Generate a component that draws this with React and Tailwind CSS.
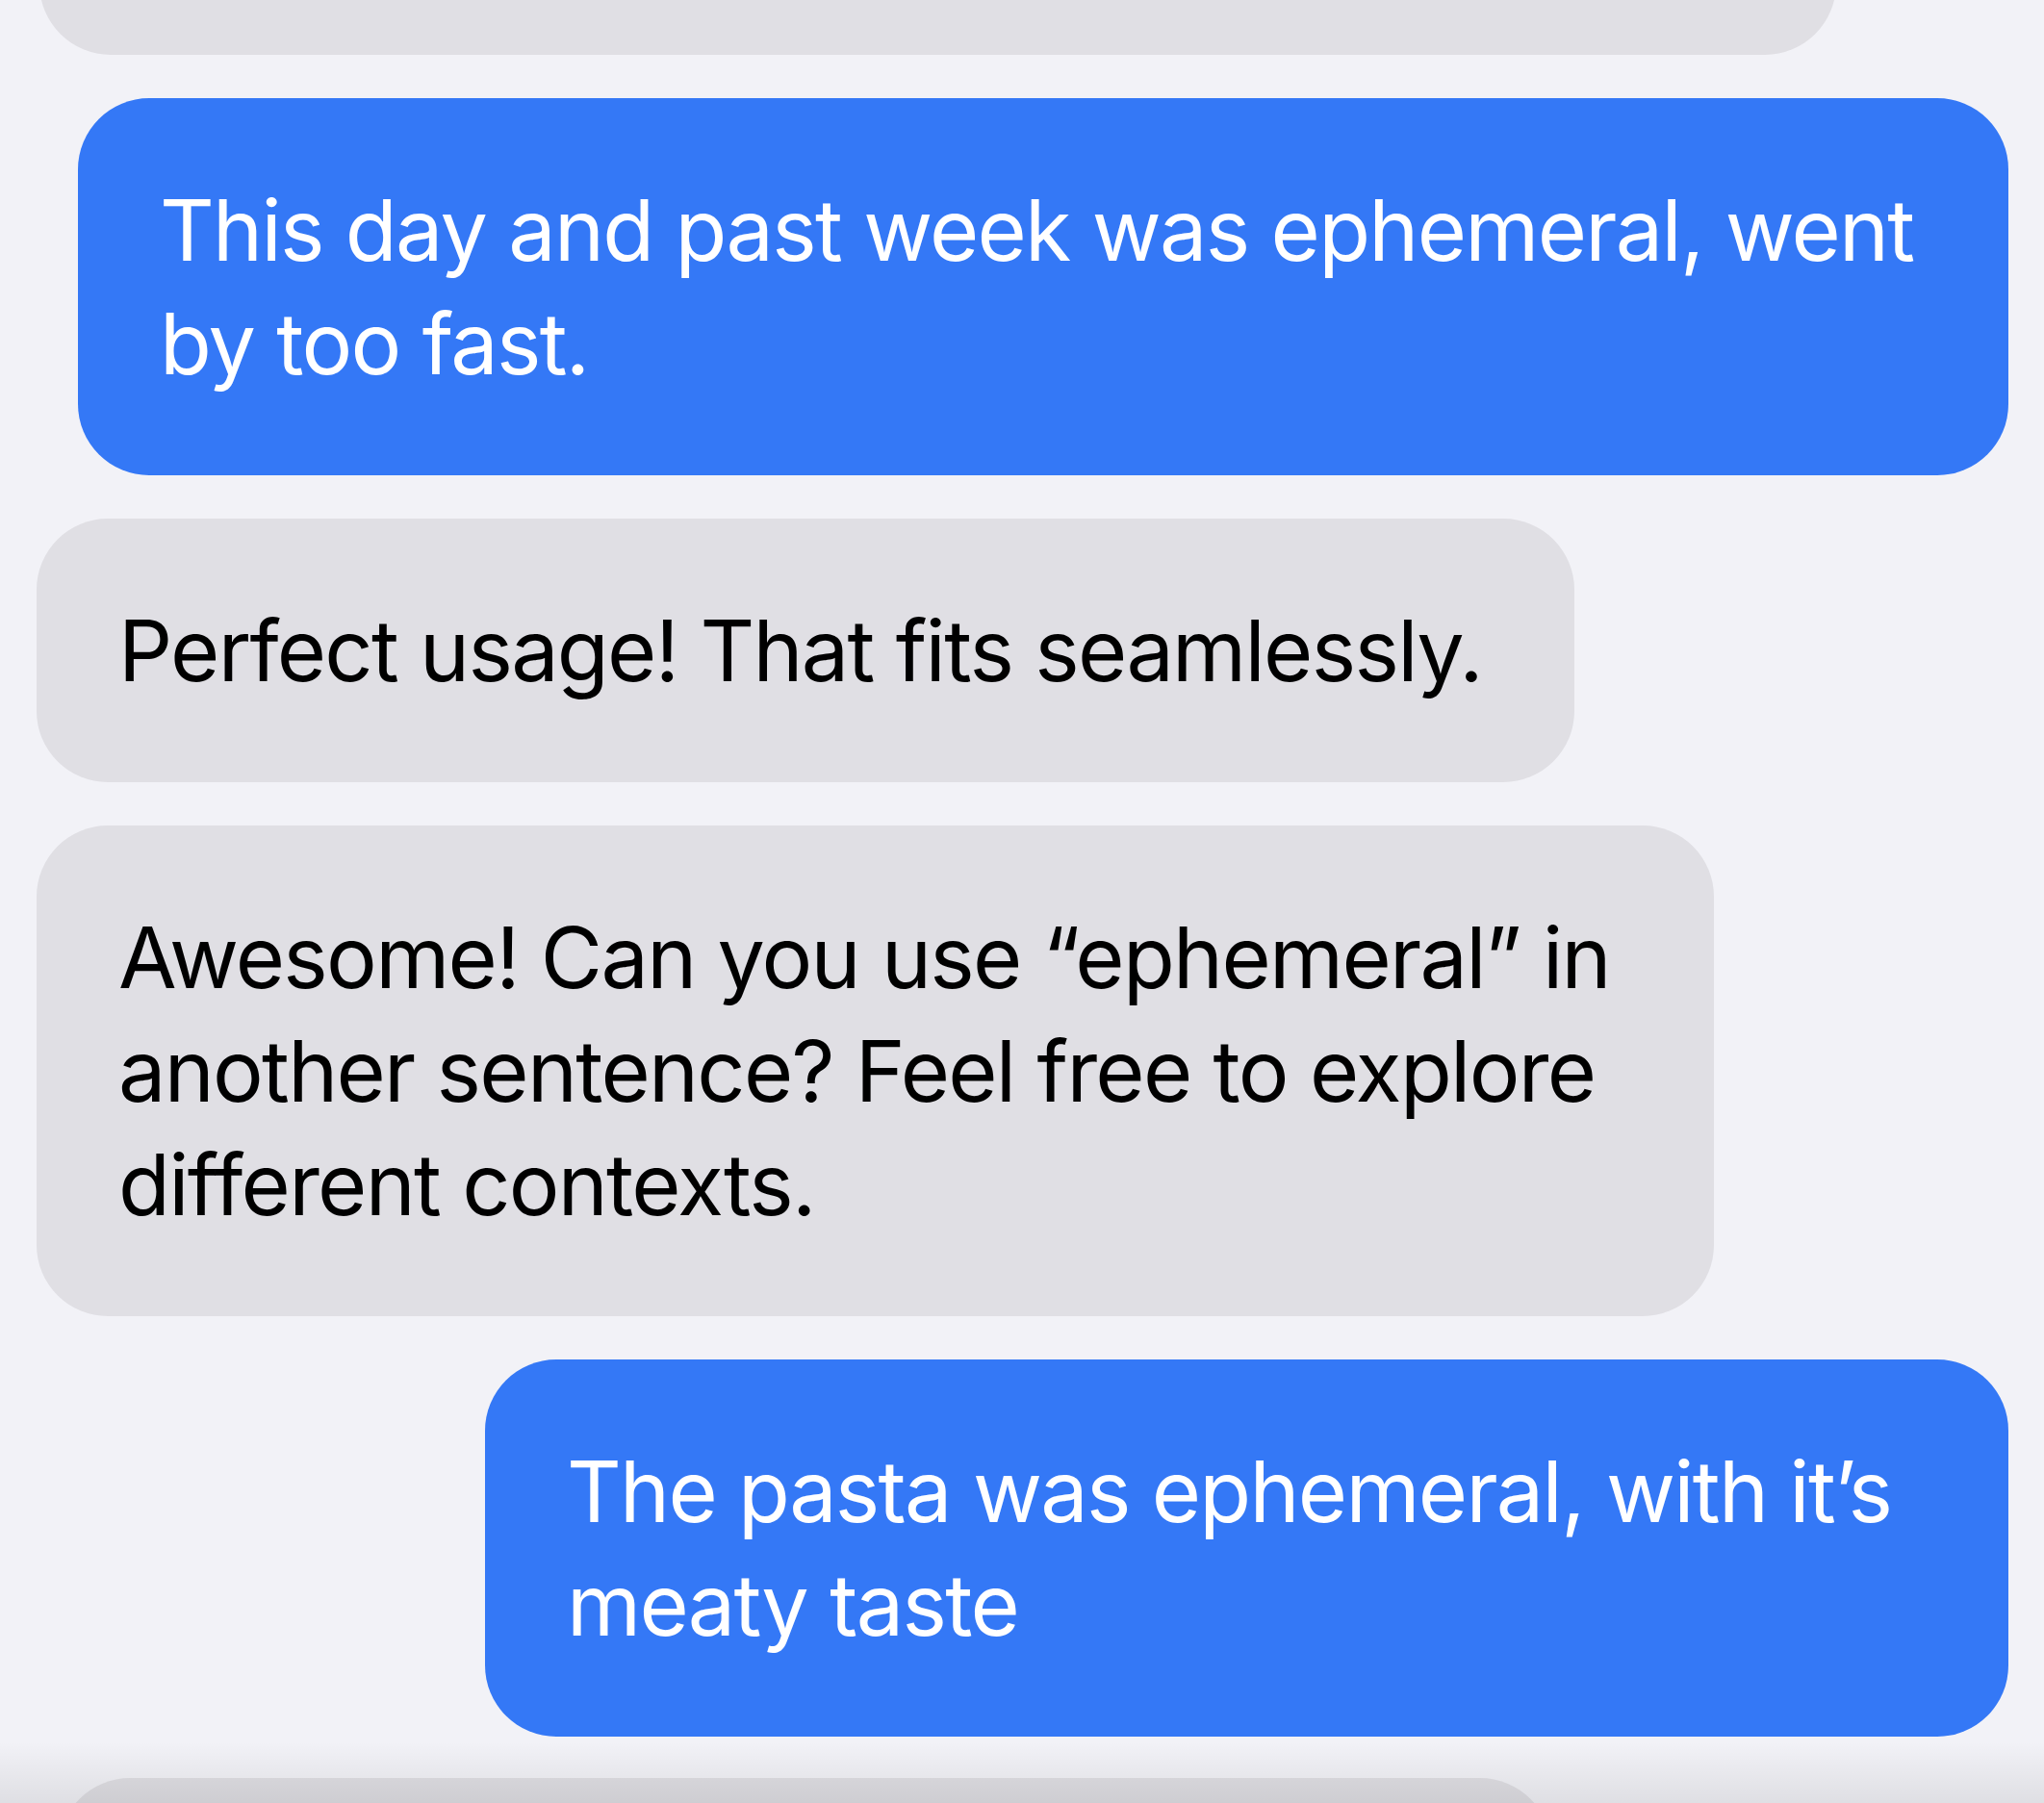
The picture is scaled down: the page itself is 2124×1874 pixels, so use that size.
import React from 'react';

const messages = [
  { id: 1, from: 'me', width: 'w-[2006px]', lines: ['This day and past week was ephemeral, went', 'by too fast.'] },
  { id: 2, from: 'them', width: 'w-[1598px]', lines: ['Perfect usage! That fits seamlessly.'] },
  { id: 3, from: 'them', width: 'w-[1743px]', lines: ['Awesome! Can you use \u201Cephemeral\u201D in', 'another sentence? Feel free to explore', 'different contexts.'] },
  { id: 4, from: 'me', width: 'w-[1583px]', lines: ['The pasta was ephemeral, with it\u2019s', 'meaty taste'] },
];

const Bubble = ({ from, width, lines }) => {
  const mine = from === 'me';
  return (
    <div
      className={`${width} rounded-[74px] px-[85px] py-[78px] text-[88px] leading-[118px] tracking-[-1.7px] whitespace-nowrap ${
        mine ? 'self-end bg-[#3478f6] text-white' : 'self-start bg-[#e0dfe4] text-black'
      }`}
    >
      {lines.map((line, i) => (
        <div key={i}>{line}</div>
      ))}
    </div>
  );
};

export default function App() {
  return (
    <div
      className="relative h-[1874px] w-[2124px] overflow-hidden bg-[#f2f2f7]"
      style={{ fontFamily: 'Inter, "Noto Sans", sans-serif' }}
    >
      <div className="flex flex-col gap-[45px] pl-[38px] pr-[37px]">
        {/* previous message, scrolled mostly out of view */}
        <div className="ml-[3px] -mt-[217px] h-[274px] w-[1867px] rounded-[74px] bg-[#e0dfe4]" />

        {messages.map((m) => (
          <Bubble key={m.id} {...m} />
        ))}

        {/* next message, under the input bar blur */}
        <div className="-mt-[2px] ml-[23px] h-[274px] w-[1551px] rounded-[74px] bg-[#e0dfe4]" />
      </div>

      {/* bottom bar fade */}
      <div className="absolute inset-x-0 bottom-0 h-[64px] bg-gradient-to-b from-black/0 to-black/[0.08]" />
    </div>
  );
}
